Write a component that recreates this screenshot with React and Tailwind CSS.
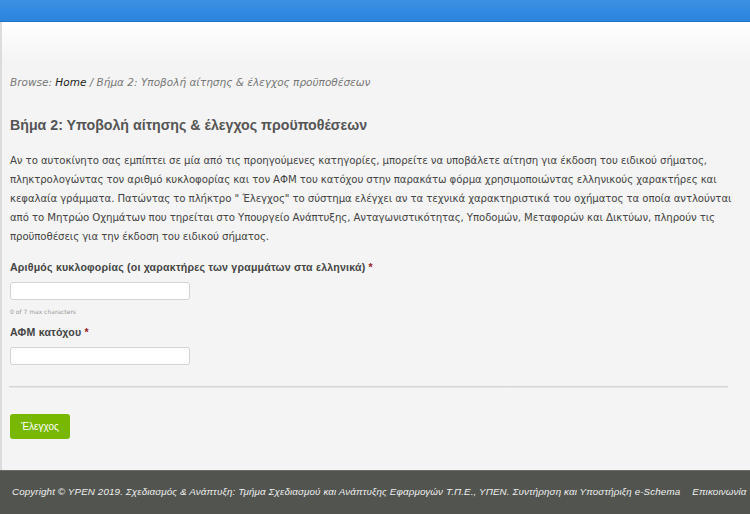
const intro = [
  "Αν το αυτοκίνητο σας εμπίπτει σε μία από τις προηγούμενες κατηγορίες, μπορείτε να υποβάλετε αίτηση για έκδοση του ειδικού σήματος,",
  "πληκτρολογώντας τον αριθμό κυκλοφορίας και τον ΑΦΜ του κατόχου στην παρακάτω φόρμα χρησιμοποιώντας ελληνικούς χαρακτήρες και",
  "κεφαλαία γράμματα. Πατώντας το πλήκτρο \" Έλεγχος\" το σύστημα ελέγχει αν τα τεχνικά χαρακτηριστικά του οχήματος τα οποία αντλούνται",
  "από το Μητρώο Οχημάτων που τηρείται στο Υπουργείο Ανάπτυξης, Ανταγωνιστικότητας, Υποδομών, Μεταφορών και Δικτύων, πληρούν τις",
  "προϋποθέσεις για την έκδοση του ειδικού σήματος.",
];

export default function App() {
  return (
    <div className="min-h-[514px] w-[750px] flex flex-col bg-[#f4f4f4] font-['DejaVu_Sans',sans-serif] text-[#444]">
      <header className="h-[22px] bg-gradient-to-b from-[#3b91e3] to-[#2a84de] border-b border-[#2371c4]" />
      <main className="flex-1 border-l-2 border-[#dcdcdc] bg-gradient-to-b from-white to-[#f4f4f4] to-[40px] pl-[8px] pr-[22px]">
        <p className="mt-[53px] text-[10.5px] italic text-[#777] leading-[14px]">
          Browse: <span className="text-[#222]">Home</span> / Βήμα 2: Υποβολή αίτησης &amp; έλεγχος προϋποθέσεων
        </p>
        <h1 className="mt-[27px] font-['Liberation_Sans',sans-serif] text-[14.2px] font-bold text-[#555] leading-[18px]">
          Βήμα 2: Υποβολή αίτησης &amp; έλεγχος προϋποθέσεων
        </h1>
        <p className="mt-[17px] text-[10.2px] leading-[19px] text-[#444] tracking-[-0.1px] whitespace-nowrap">
          {intro.map((line) => (
            <span key={line} className="block">
              {line}
            </span>
          ))}
        </p>
        <form className="mt-[14px]">
          <label className="block font-['Liberation_Sans',sans-serif] text-[10.6px] font-bold tracking-[0.2px] text-[#444] leading-[14px]">
            Αριθμός κυκλοφορίας (οι χαρακτήρες των γραμμάτων στα ελληνικά) <span className="text-[#9b1c1c]">*</span>
          </label>
          <input type="text" className="mt-[8px] block w-[180px] h-[18px] rounded-[3px] border border-[#d4d4d4] bg-white" />
          <p className="mt-[8px] text-[6px] text-[#999] leading-[8px]">0 of 7 max characters</p>
          <label className="mt-[9px] block font-['Liberation_Sans',sans-serif] text-[10.6px] font-bold tracking-[0.2px] text-[#444] leading-[14px]">
            ΑΦΜ κατόχου <span className="text-[#9b1c1c]">*</span>
          </label>
          <input type="text" className="mt-[8px] block w-[180px] h-[18px] rounded-[3px] border border-[#d4d4d4] bg-white" />
          <hr className="mt-[21px] ml-[-1px] mr-0 h-[2px] border-0 border-t border-[#d6d6d6] bg-[#e6e6e6]" />
          <button type="button" className="mt-[26px] w-[60px] h-[25px] rounded-[3px] bg-[#78b800] text-white text-[10px] font-['Liberation_Sans',sans-serif]">
            Έλεγχος
          </button>
        </form>
        <div className="h-[31px]" />
      </main>
      <footer className="h-[44px] bg-[#52544f] border-t border-[#6a6c67] flex items-center justify-between gap-[12px] pl-[12px] pr-[10px] font-['Liberation_Sans',sans-serif] text-[9.8px] tracking-[0.12px] italic text-[#f0f0f0] whitespace-nowrap">
        <span>
          Copyright © YPEN 2019. Σχεδιασμός &amp; Ανάπτυξη: Τμήμα Σχεδιασμού και Ανάπτυξης Εφαρμογών Τ.Π.Ε., ΥΠΕΝ. Συντήρηση και Υποστήριξη e-Schema
        </span>
        <span>Επικοινωνία</span>
      </footer>
    </div>
  );
}
